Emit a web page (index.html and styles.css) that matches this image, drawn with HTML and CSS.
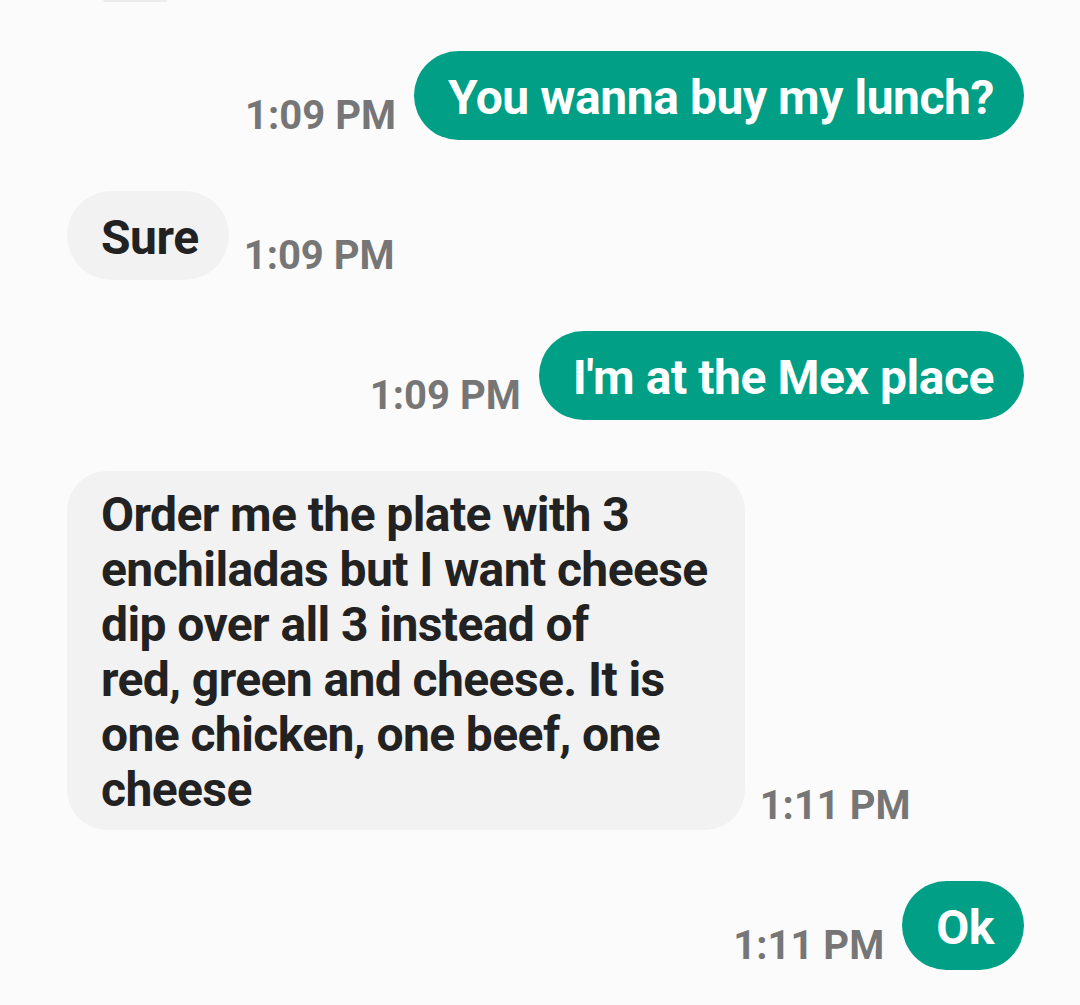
FILE: index.html
```html
<!DOCTYPE html>
<html>
<head>
<meta charset="utf-8">
<link rel="stylesheet" href="styles.css">
</head>
<body>
<div class="chat">
  <div class="prev-edge"></div>
  <div class="row out">
    <span class="time">1:09 PM</span>
    <div class="bubble sent">You wanna buy my lunch?</div>
  </div>
  <div class="row in">
    <div class="bubble recv">Sure</div>
    <span class="time">1:09 PM</span>
  </div>
  <div class="row out">
    <span class="time">1:09 PM</span>
    <div class="bubble sent">I'm at the Mex place</div>
  </div>
  <div class="row in">
    <div class="bubble recv multi">Order me the plate with 3<br>enchiladas but I want cheese<br>dip over all 3 instead of<br>red, green and cheese. It is<br>one chicken, one beef, one<br>cheese</div>
    <span class="time">1:11 PM</span>
  </div>
  <div class="row out">
    <span class="time">1:11 PM</span>
    <div class="bubble sent">Ok</div>
  </div>
</div>
</body>
</html>
```
FILE: styles.css
```css
html, body {
  margin: 0;
  padding: 0;
  background: #fbfbfb;
}
body {
  width: 1080px;
  height: 1005px;
  overflow: hidden;
  font-family: Roboto, "Noto Sans", sans-serif;
}
.chat {
  display: flex;
  flex-direction: column;
  gap: 51px;
  padding: 0 56px 0 67px;
}
.prev-edge {
  width: 64px;
  height: 2px;
  margin-left: 36px;
  margin-bottom: -2px;
  background: #ececec;
  border-radius: 0 0 2px 2px;
}
.row {
  display: flex;
  align-items: flex-end;
  gap: 15px;
}
.row.out {
  justify-content: flex-end;
  gap: 18px;
}
.bubble {
  font-size: 48px;
  font-weight: 700;
  line-height: 55px;
  letter-spacing: -0.45px;
  padding: 19px 30px 15px 34px;
  border-radius: 45px;
}
.bubble.sent {
  background: #009f86;
  color: #ffffff;
}
.bubble.recv {
  background: #f2f2f2;
  color: #222222;
}
.bubble.multi {
  letter-spacing: -0.6px;
  padding-top: 16px;
  padding-right: 37px;
  padding-bottom: 13px;
  border-radius: 40px;
}
.time {
  font-size: 40px;
  font-weight: 700;
  color: #767676;
  line-height: 40px;
  margin-bottom: 4px;
}
```
